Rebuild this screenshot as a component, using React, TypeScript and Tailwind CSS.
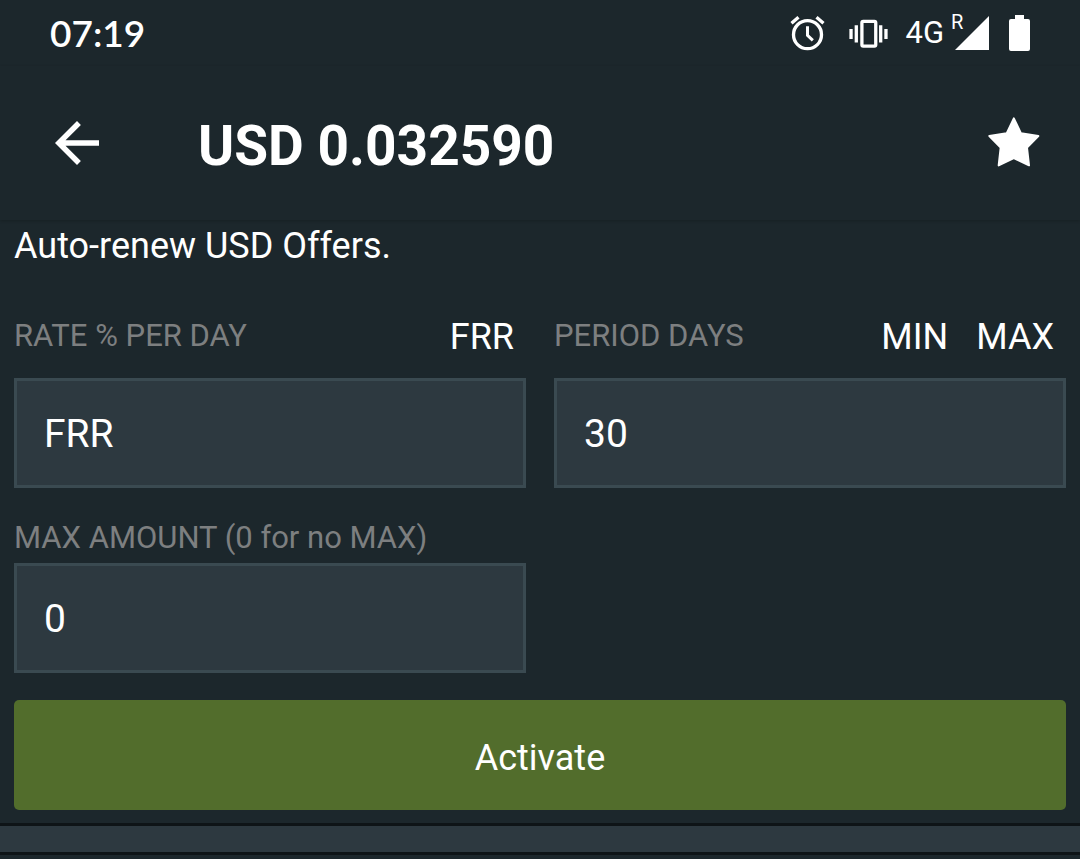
import { useState } from "react";

const fieldClass = "block w-full h-[110px] border-3 border-[#3a4a51] bg-[#2d3940] pt-0.5 pl-[27px] pr-4 text-[39px] text-white outline-none";
const labelClass = "text-[31px] leading-10 text-[#7d7f80]";

function AlarmIcon(){
    return <svg viewBox="30 42 104 108" className="w-[35px] h-9" fill="none" stroke="currentColor" strokeWidth="10">
        <circle cx="82" cy="101" r="42"/>
        <path d="M82 76V103L98 118" strokeWidth="9"/>
        <path d="M34 67L55 49M109 49L130 67"/>
    </svg>
}

function VibrateIcon(){
    return <svg viewBox="208 54 118 88" className="w-[39px] h-[29px]" fill="none" stroke="currentColor" strokeWidth="10">
        <rect x="247" y="61" width="42" height="75" rx="4"/>
        <path d="M230 73V125M214 84V115M304 73V125M320 84V115"/>
    </svg>
}

function BatteryIcon(){
    return <svg viewBox="0 0 21 36" className="w-[21px] h-9" fill="currentColor">
        <path d="M6 0h9v4h4a2 2 0 0 1 2 2v28a2 2 0 0 1-2 2H2a2 2 0 0 1-2-2V6a2 2 0 0 1 2-2h4z"/>
    </svg>
}

function StatusBar(){
    return <div className="flex h-[66px] items-center justify-between px-[50px]">
        <span className="font-['Lato',sans-serif] text-[37px] leading-10 font-semibold">07:19</span>
        <div className="flex items-center">
            <AlarmIcon/>
            <div className="ml-6"><VibrateIcon/></div>
            <span className="ml-[17px] text-[31px] leading-9">4G</span>
            <div className="relative ml-[11px]">
                <span className="absolute -left-1 -top-1 text-[20px] leading-5">R</span>
                <svg viewBox="0 0 34 34" className="w-[34px] h-[34px]" fill="currentColor"><path d="M34 0v34H0z"/></svg>
            </div>
            <div className="ml-5"><BatteryIcon/></div>
        </div>
    </div>
}

function TopBar(){
    return <header className="flex h-[154px] items-center pl-11 pr-10 shadow-[0_1px_3px_rgba(0,0,0,0.2)]">
        <button type="button" aria-label="Back">
            <svg viewBox="0 0 24 24" className="w-[66px] h-[66px]" fill="currentColor">
                <path d="M20 11H7.83l5.59-5.59L12 4l-8 8 8 8 1.41-1.41L7.83 13H20v-2z"/>
            </svg>
        </button>
        <h1 className="ml-[88px] flex-1 pt-1.5 text-[55px] leading-16 font-bold">USD 0.032590</h1>
        <button type="button" aria-label="Favourite" className="pb-0.5">
            <svg viewBox="54 49 154 150" className="w-[52px] h-[50px]" fill="currentColor" stroke="currentColor" strokeWidth="6" strokeLinejoin="round">
                <path d="M130.500 53L152 98L204 106L170 141L176 194L130.500 172L85 194L91 141L57 106L109 98Z"/>
            </svg>
        </button>
    </header>
}

export default function App(){
    const [rate, setRate] = useState("FRR");
    const [period, setPeriod] = useState("30");
    const [maxAmount, setMaxAmount] = useState("0");

    return <div className="min-h-screen bg-[#1c272c] font-['Roboto',sans-serif] text-white">
        <StatusBar/>
        <TopBar/>
        <main>
            <form className="px-3.5 pt-0.5 pb-[13px]" onSubmit={(e) => e.preventDefault()}>
                <p className="text-[36px] leading-12">Auto-renew USD Offers.</p>
                <div className="mt-[42px] grid grid-cols-2 gap-x-7">
                    <div>
                        <div className="flex h-[66px] items-start justify-between pr-3">
                            <label htmlFor="rate" className={`${labelClass} pt-1`}>RATE % PER DAY</label>
                            <button type="button" className="text-[36px] leading-[50px]" onClick={() => setRate("FRR")}>FRR</button>
                        </div>
                        <input id="rate" className={fieldClass} value={rate} onChange={(e) => setRate(e.target.value)}/>
                    </div>
                    <div>
                        <div className="flex h-[66px] items-start justify-between pr-3">
                            <label htmlFor="period" className={`${labelClass} pt-1`}>PERIOD DAYS</label>
                            <div className="flex gap-7">
                                <button type="button" className="text-[36px] leading-[50px]" onClick={() => setPeriod("2")}>MIN</button>
                                <button type="button" className="text-[36px] leading-[50px]" onClick={() => setPeriod("30")}>MAX</button>
                            </div>
                        </div>
                        <input id="period" className={fieldClass} value={period} onChange={(e) => setPeriod(e.target.value)}/>
                    </div>
                    <div className="mt-[30px]">
                        <label htmlFor="max-amount" className={`${labelClass} mb-[5px] block`}>MAX AMOUNT (0 for no MAX)</label>
                        <input id="max-amount" className={fieldClass} value={maxAmount} onChange={(e) => setMaxAmount(e.target.value)}/>
                    </div>
                </div>
                <button type="submit" className="mt-[27px] h-[110px] w-full rounded-[5px] bg-[#526d2c] pt-1.5 text-[36px]">Activate</button>
            </form>
            <div className="h-8 border-y-3 border-[#0e1417] bg-[#2d3940]"></div>
        </main>
    </div>
}
